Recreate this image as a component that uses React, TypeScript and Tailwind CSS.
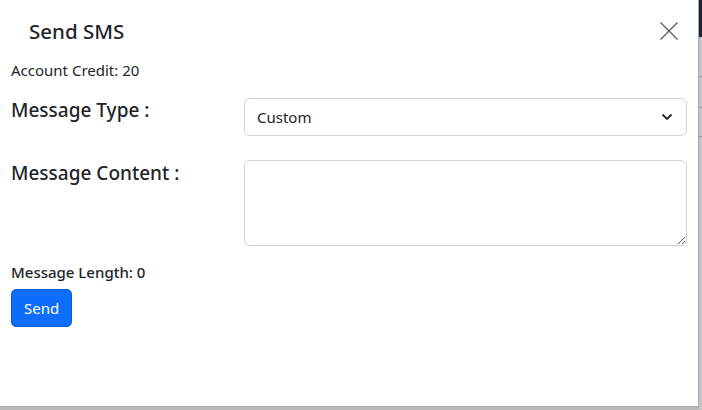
import { useState } from "react";

export default function App() {
  const [type, setType] = useState("Custom");
  const [content, setContent] = useState("");

  return (
    <div
      className="flex w-[702px] h-[410px] bg-[#b8babd] overflow-hidden"
      style={{ fontFamily: '"Noto Sans", "Open Sans", sans-serif' }}
    >
      {/* Modal */}
      <div className="flex flex-col w-[699px] h-[407px] bg-white border-r border-b border-[#a9abae] text-[#212529]">
        {/* Header */}
        <div className="flex items-center justify-between h-[62px] pl-[29px] pr-[19px]">
          <h5 className="text-[20.5px] font-medium">Send SMS</h5>
          <button aria-label="Close" className="w-[20px] h-[20px] flex items-center justify-center text-[#555]">
            <svg width="18" height="18" viewBox="0 0 18 18" fill="none" stroke="currentColor" strokeWidth="1.1">
              <path d="M0.5 0.5L17.5 17.5M17.5 0.5L0.5 17.5" />
            </svg>
          </button>
        </div>

        {/* Body */}
        <div className="flex flex-col px-[11px]">
          <p className="text-[15px] leading-[18px] -mt-[1px]">Account Credit: {20}</p>

          <div className="grid grid-cols-[233px_1fr] mt-[19px]">
            <label className="text-[19px] font-medium leading-[24px]">Message Type :</label>
            <div className="relative">
              <select
                value={type}
                onChange={(e) => setType(e.target.value)}
                className="appearance-none w-full h-[38px] border border-[#ced4da] rounded-[6px] pl-[12px] text-[15px] bg-white outline-none"
              >
                <option>Custom</option>
                <option>Template</option>
              </select>
              <svg className="absolute right-[14px] top-[14px] pointer-events-none" width="12" height="9" viewBox="0 0 12 9" fill="none" stroke="#212529" strokeWidth="1.8">
                <path d="M1.5 2.5L6 7L10.5 2.5" />
              </svg>
            </div>
          </div>

          <div className="grid grid-cols-[233px_1fr] mt-[24px]">
            <label className="text-[19px] font-medium leading-[24px] mt-[1px]">Message Content :</label>
            <textarea
              value={content}
              onChange={(e) => setContent(e.target.value)}
              className="w-full h-[86px] border border-[#ced4da] rounded-[6px] px-[12px] py-[6px] text-[15px] outline-none block"
            />
          </div>

          <p className="text-[15px] font-medium leading-[20px] mt-[16px]">Message Length: {content.length}</p>

          <div className="mt-[7px]">
            <button className="bg-[#0d6efd] text-white text-[15px] h-[38px] px-[12px] rounded-[5px] border border-[#0b5ed7]">
              Send
            </button>
          </div>
        </div>
      </div>

      {/* Backdrop strip behind the modal */}
      <div className="flex flex-col w-[3px]">
        <div className="h-[37px] bg-[#1c2233]" />
        <div className="h-[39px] bg-[#c3c4c8]" />
        <div className="h-[1px] bg-[#8e9094]" />
        <div className="h-[30px] bg-[#c3c4c8]" />
        <div className="h-[1px] bg-[#8e9094]" />
        <div className="h-[28px] bg-[#c3c4c8]" />
        <div className="h-[1px] bg-[#8e9094]" />
        <div className="flex-1 bg-[#c3c4c8]" />
      </div>
    </div>
  );
}
